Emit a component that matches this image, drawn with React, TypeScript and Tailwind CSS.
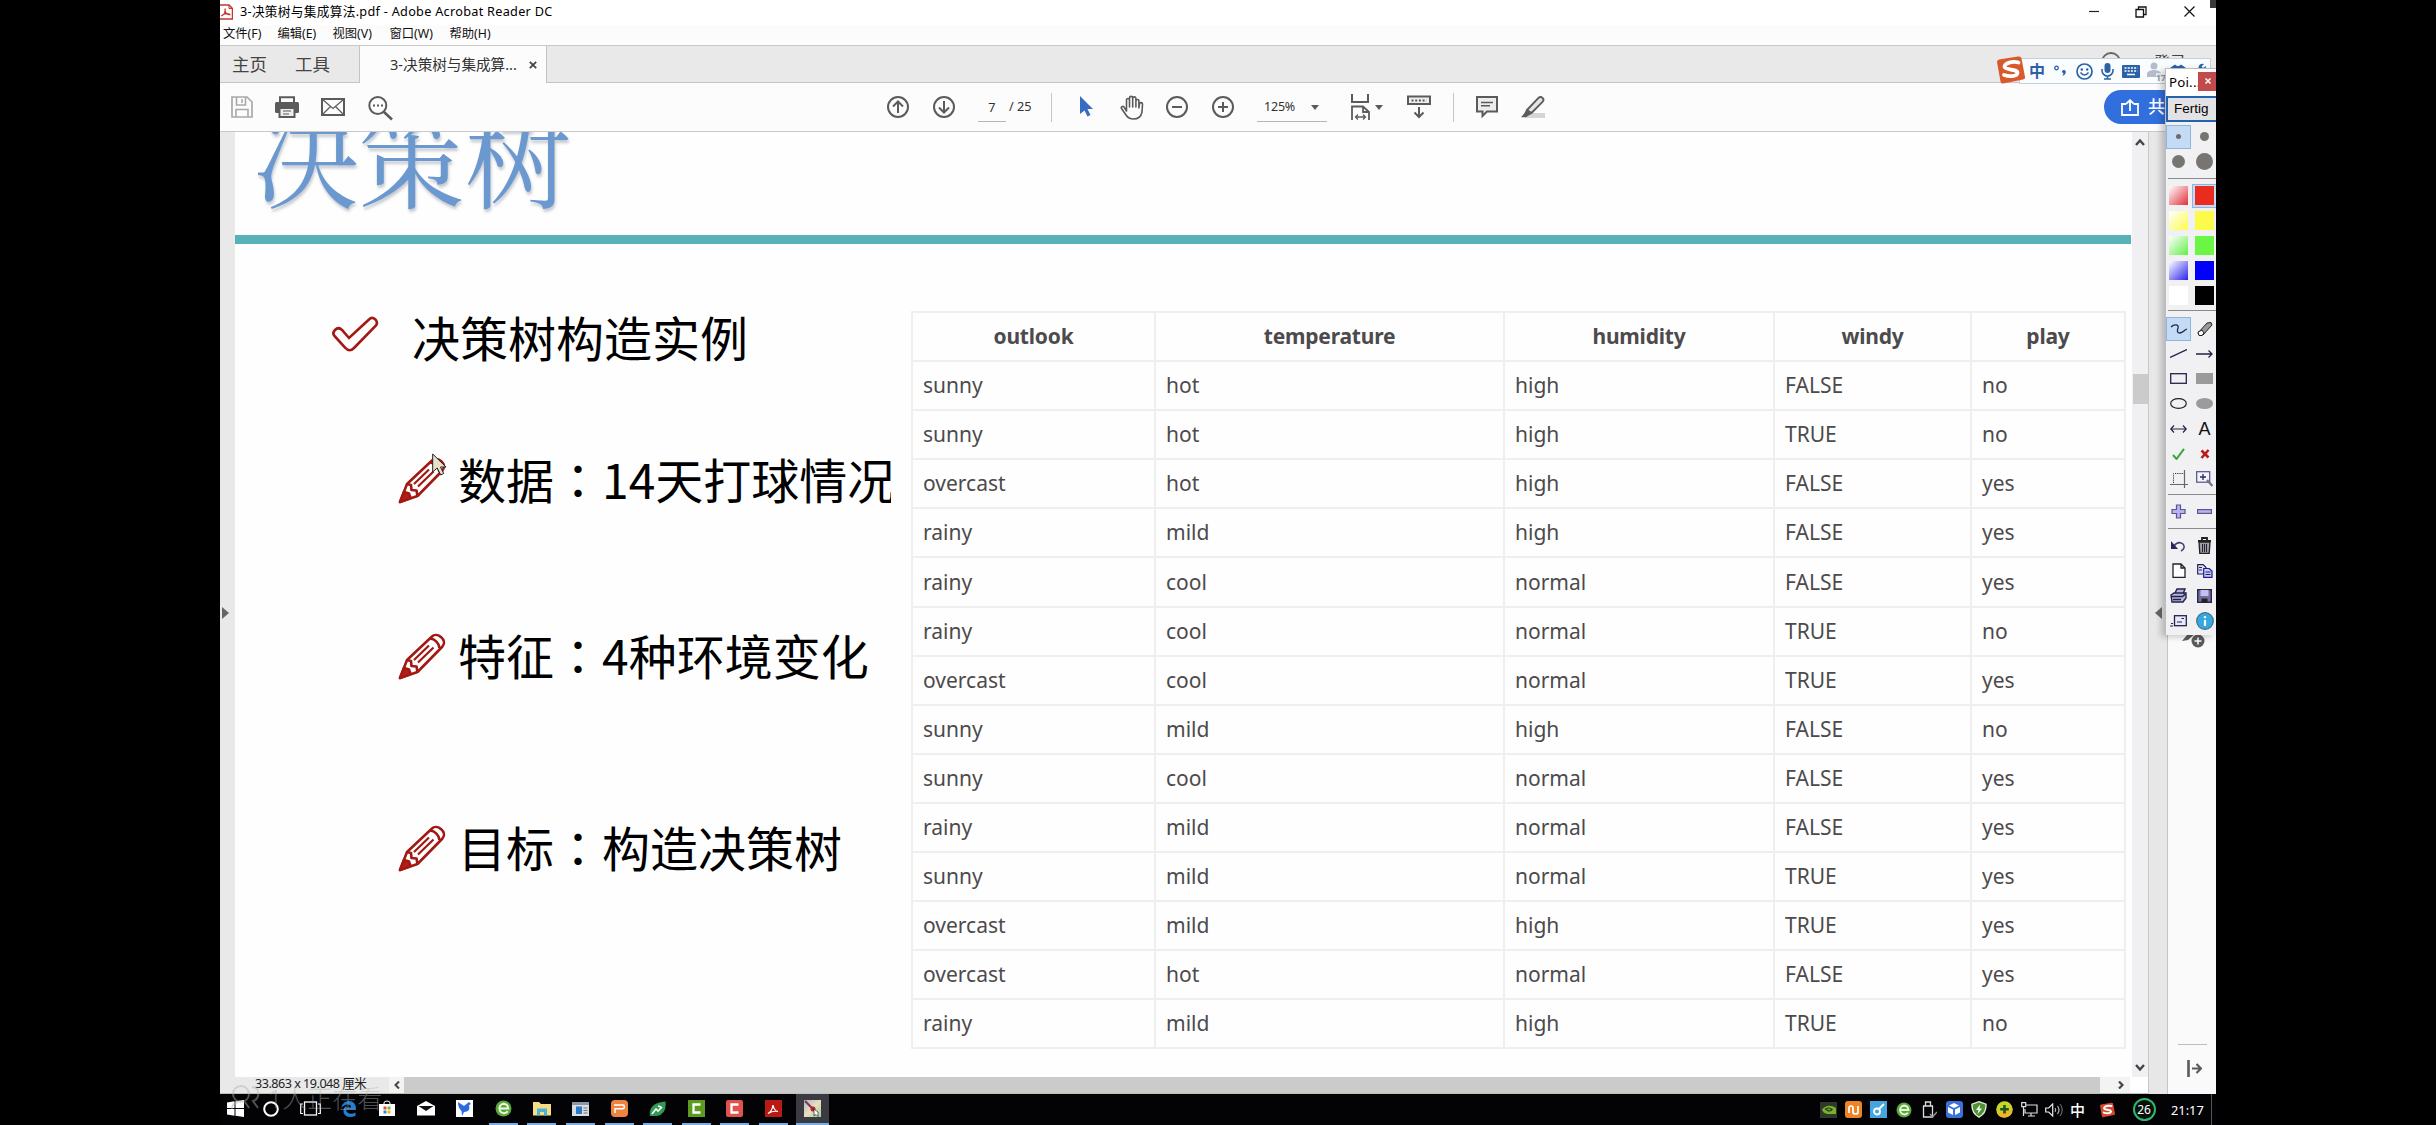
import React from "react";

const SANS = "font-['Noto_Sans','Noto_Sans_CJK_SC',sans-serif]";

type IconProps = { w: number; h: number; vb?: string; className?: string; children: React.ReactNode };
function Icon({ w, h, vb, className = "", children }: IconProps) {
  return (
    <svg width={w} height={h} viewBox={vb ?? `0 0 ${w} ${h}`} fill="none" className={`block shrink-0 ${className}`}>
      {children}
    </svg>
  );
}

const rows = [
  ["sunny", "hot", "high", "FALSE", "no"],
  ["sunny", "hot", "high", "TRUE", "no"],
  ["overcast", "hot", "high", "FALSE", "yes"],
  ["rainy", "mild", "high", "FALSE", "yes"],
  ["rainy", "cool", "normal", "FALSE", "yes"],
  ["rainy", "cool", "normal", "TRUE", "no"],
  ["overcast", "cool", "normal", "TRUE", "yes"],
  ["sunny", "mild", "high", "FALSE", "no"],
  ["sunny", "cool", "normal", "FALSE", "yes"],
  ["rainy", "mild", "normal", "FALSE", "yes"],
  ["sunny", "mild", "normal", "TRUE", "yes"],
  ["overcast", "mild", "high", "TRUE", "yes"],
  ["overcast", "hot", "normal", "FALSE", "yes"],
  ["rainy", "mild", "high", "TRUE", "no"],
];

function TitleBar() {
  return (
    <div className="flex h-[25px] items-center bg-white pb-[2px]">
      <Icon w={13} h={16} className="">
        <path d="M0 1h9l3.500 3.500V15H0" fill="#fff" stroke="#c0392f" strokeWidth="1.500" />
        <path d="M9 1v3.500h3.500" stroke="#c0392f" />
        <path d="M1 12c4-1.500 4.500-5 4-7.500M5 7c1 3 2.500 4 5.500 3.500M2.500 11c2-1.500 4.500-1.500 7-1" stroke="#c0392f" strokeWidth="1.300" />
      </Icon>
      <span className="ml-[7px] text-[12.700px] tracking-[0.28px] whitespace-nowrap text-black">3-决策树与集成算法.pdf - Adobe Acrobat Reader DC</span>
      <div className="ml-auto flex items-center">
        <Icon w={11} h={11}><path d="M0 5.500h10" stroke="#222" strokeWidth="1.200" /></Icon>
        <Icon w={12} h={12} className="ml-[35px]">
          <path d="M1 3.500h7.500V11H1zM3.500 3.500V1H11v7.500H8.500" stroke="#111" strokeWidth="1.300" />
        </Icon>
        <Icon w={11} h={11} className="mr-[21px] ml-[37px]"><path d="M.5.5l10 10M10.500.5l-10 10" stroke="#111" strokeWidth="1.200" /></Icon>
      </div>
    </div>
  );
}

function MenuBar() {
  return (
    <div className="flex h-[20px] items-center bg-[#fcfcfc] pb-[1px] pl-[3px] text-[12.300px] whitespace-nowrap text-[#111]">
      <span className="w-[54.500px]">文件(F)</span>
      <span className="w-[55px]">编辑(E)</span>
      <span className="w-[57px]">视图(V)</span>
      <span className="w-[60px]">窗口(W)</span>
      <span>帮助(H)</span>
    </div>
  );
}

function TabBar() {
  return (
    <div className="flex h-[38px] border-t border-[#c9c9cb] bg-[#e9e9e9] text-[#444]">
      <div className="flex w-[139px] items-center border-b border-[#c4c4c4] pl-[12px] text-[17.500px]">
        <span className="w-[63px]">主页</span>
        <span>工具</span>
      </div>
      <div className="flex w-[188px] items-center border-x border-[#c4c4c4] bg-[#fcfcfc] pl-[30px] text-[14.600px] whitespace-nowrap text-[#333]">
        <span className="w-[139px]">3-决策树与集成算...</span>
        <Icon w={8} h={8}><path d="M.8.8l6.400 6.400M7.200.8L.8 7.200" stroke="#444" strokeWidth="1.800" /></Icon>
      </div>
      <div className="flex flex-1 overflow-hidden border-b border-[#c4c4c4]">
        <Icon w={20} h={20} className="mt-[6px] ml-[1554px]"><circle cx="10" cy="10" r="9" stroke="#666" strokeWidth="1.800" /></Icon>
        <span className="ml-[33px] text-[16px] leading-[32px] text-[#444]">登录</span>
      </div>
    </div>
  );
}

const G = "#5b5b5b";
function Toolbar() {
  return (
    <div className="flex h-[49px] items-center border-b border-[#c9c9cb] bg-[#fcfcfc] text-[12.700px] text-[#333]">
      <Icon w={22} h={22} className="ml-[11px]">
        <path d="M1 1h15l5 5v15H1z" stroke="#a8a8a8" strokeWidth="1.700" />
        <path d="M5.500 1v8h9V1M11 3v4M5 21v-7.500h12V21" stroke="#a8a8a8" strokeWidth="1.600" />
      </Icon>
      <Icon w={24} h={22} className="ml-[22px]">
        <path d="M5 6V1.200h14V6" stroke={G} strokeWidth="2" />
        <rect x="0" y="6" width="24" height="11" rx="1.500" fill={G} />
        <rect x="4.500" y="12" width="15" height="9" fill="#eee" stroke={G} strokeWidth="2" />
        <path d="M8 15h8M8 18h6" stroke={G} strokeWidth="1.200" />
      </Icon>
      <Icon w={24} h={18} className="ml-[22px]">
        <rect x="1" y="1" width="22" height="16" stroke={G} strokeWidth="2" />
        <path d="M1.500 1.500L12 10.500 22.500 1.500M1.500 16.500l8-8M22.500 16.500l-8-8" stroke={G} strokeWidth="1.200" />
      </Icon>
      <Icon w={25} h={25} className="mt-[2px] ml-[23px]">
        <circle cx="9.800" cy="9.500" r="8.500" stroke={G} strokeWidth="2" />
        <path d="M16 16l8 7.500" stroke={G} strokeWidth="2.600" />
        <path d="M5 9.500h2M9 9.500h2M13 9.500h2" stroke={G} strokeWidth="2" />
      </Icon>
      <Icon w={22} h={22} className="ml-[494px]">
        <circle cx="11" cy="11" r="10" stroke={G} strokeWidth="2" />
        <path d="M11 17V5.500M6 10.500l5-5 5 5" stroke={G} strokeWidth="2" />
      </Icon>
      <Icon w={22} h={22} className="ml-[24px]">
        <circle cx="11" cy="11" r="10" stroke={G} strokeWidth="2" />
        <path d="M11 5v11.500M6 11.500l5 5 5-5" stroke={G} strokeWidth="2" />
      </Icon>
      <span className="mt-[2px] ml-[23px] h-[28px] w-[28px] border-b border-[#b5b5b5] text-center leading-[26px]">7</span>
      <span className="ml-[3px] w-[22px] whitespace-nowrap">/ 25</span>
      <span className="ml-[20px] h-[29px] w-px bg-[#c6c6c6]" />
      <Icon w={14} h={22} className="ml-[28px]"><path d="M0 0v18l4.500-3.500 3 6 3-1.500-3-6H13z" fill="#386cc0" /></Icon>
      <Icon w={24} h={25} className="ml-[26px]" vb="0 0 24 25">
        <path d="M6.500 16V5a1.500 1.500 0 013 0v7V3a1.600 1.600 0 013.200 0v9V3.500a1.600 1.600 0 013.200 0V12 6a1.500 1.500 0 013 0v7l.6-4a1.500 1.500 0 013 .2L22 17c-.8 4-3.500 7-8.500 7-4 0-6-1.600-7.500-4l-4.500-6.500c-.8-1.400 1.200-2.800 2.500-1.500z" stroke={G} strokeWidth="1.600" strokeLinejoin="round" />
      </Icon>
      <Icon w={22} h={22} className="ml-[22px]">
        <circle cx="11" cy="11" r="10" stroke={G} strokeWidth="2" /><path d="M6 11h10" stroke={G} strokeWidth="2" />
      </Icon>
      <Icon w={22} h={22} className="ml-[24px]">
        <circle cx="11" cy="11" r="10" stroke={G} strokeWidth="2" /><path d="M6 11h10M11 6v10" stroke={G} strokeWidth="2" />
      </Icon>
      <span className="mt-[2px] ml-[23px] flex h-[28px] w-[70px] items-center border-b border-[#b5b5b5] pl-[7px] text-[12.500px]">
        <span className="w-[47px] tracking-[-0.2px]">125%</span>
        <Icon w={8} h={5} className="mb-[1px]"><path d="M0 0h8L4 5z" fill={G} /></Icon>
      </span>
      <Icon w={19} h={26} className="ml-[24px]">
        <path d="M1 0v8h16V0" stroke={G} strokeWidth="2" />
        <path d="M1 26V12.500h11l6 5.500v8M12 12.500V18h6" stroke={G} strokeWidth="1.800" />
        <path d="M4.500 23h10M7 20.500L4.500 23 7 25.500M12 20.500l2.500 2.500-2.500 2.500" stroke={G} strokeWidth="1.300" />
      </Icon>
      <Icon w={8} h={5} className="ml-[5px]"><path d="M0 0h8L4 5z" fill={G} /></Icon>
      <Icon w={24} h={24} className="ml-[24px]">
        <rect x="1" y="1.500" width="22" height="7.500" stroke={G} strokeWidth="2" fill="#eee" />
        <path d="M4.500 5.500h15" stroke={G} strokeWidth="2" strokeDasharray="2 1.700" />
        <path d="M12 12v10M7.500 17.500l4.500 4.500 4.500-4.500" stroke={G} strokeWidth="2" />
      </Icon>
      <span className="ml-[22px] h-[29px] w-px bg-[#c6c6c6]" />
      <Icon w={22} h={22} className="ml-[22px]">
        <path d="M1 1h20v14.500H11L6.500 20v-4.500H1z" fill="#ececec" stroke={G} strokeWidth="2" />
        <path d="M5 6.500h12M5 9.800h9" stroke={G} strokeWidth="1.400" />
      </Icon>
      <Icon w={24} h={24} className="ml-[23px]">
        <path d="M7 18h17v5H4z" fill="#d5d5d5" />
        <path d="M6 15L17.500 2.800a2.800 2.800 0 014 4L10.500 18z" fill="#e5e5e5" stroke={G} strokeWidth="1.900" />
        <path d="M5.500 14.500l5 4.500-3 1.500-2.500 1.800H0l3-3.500z" fill={G} />
      </Icon>
      <div className="ml-auto flex h-[34px] w-[112px] items-center rounded-l-full bg-[#326fde] pl-[17px] text-white">
        <Icon w={18} h={17}>
          <path d="M5.500 5H1v11h16V5h-4.500M9 12V1.500M5.500 4.500L9 1.200l3.500 3.300" stroke="#fff" strokeWidth="1.800" />
        </Icon>
        <span className="ml-[9px] text-[17px] font-medium whitespace-nowrap">共享</span>
      </div>
    </div>
  );
}

function Pencil() {
  return (
    <Icon w={48} h={48} className="mr-[12px] mb-[2px]">
      <g stroke="#a31813" strokeWidth="2.600" strokeLinejoin="round">
        <path d="M2 46L9 28 34 4.500C39-.5 50 8 44.500 14.500L19.500 40z" />
        <path d="M9 28l4 1 .5 5 5 .5 1 5.500M32 6.500c5 .5 9 4.500 9.500 9.500" />
        <path d="M20 30.500L35.500 15.500M16 28L31 13.500" strokeWidth="2.200" />
        <path d="M2 46l4-10 5 1.500 1.500 4.500z" fill="#b81c15" />
      </g>
    </Icon>
  );
}

function Bullet({ className, label, children }: { className: string; label: string; children: React.ReactNode }) {
  return (
    <div className={`flex h-[48px] items-center pl-[163px] ${className}`}>
      <Pencil />
      <span className="-mt-[7px] w-[433px] overflow-hidden leading-[72px] whitespace-nowrap">
        {label}
        <span lang="zh-TW" className="font-['Noto_Sans_CJK_TC',sans-serif]">：</span>
        {children}
      </span>
    </div>
  );
}

function Page() {
  return (
    <div className="flex min-w-0 flex-1 flex-col overflow-hidden bg-[#fefefe]">
      <div className="flex h-[103px] shrink-0 overflow-hidden">
        <h1 className="-mt-[58px] ml-[18px] h-[160px] text-[106px] leading-[160px] font-normal whitespace-nowrap text-[#6b98cf] [text-shadow:1px_3px_3px_rgba(90,100,120,0.35)] font-['Noto_Serif_CJK_SC','Noto_Serif_SC','SimSun','Noto_Sans_CJK_SC',serif]">决策树</h1>
      </div>
      <div className="h-[9px] w-[1896px] shrink-0 bg-[#56b2b6]" />
      <div className="flex">
        <div className="w-[676px] shrink-0 text-[48px] text-black font-['Noto_Sans_CJK_SC',sans-serif]">
          <div className="mt-[71px] flex h-[48px] items-center pl-[97px]">
            <Icon w={47} h={36} className="-mt-[10px]">
              <path d="M3 14c3-3 5-2 7 0l7 8L37 3.500c4-4 10 1.500 7 6L22 32c-3 3-6 3-8.500 0L3 20.500c-2-2-2-4.500 0-6.500z" stroke="#a31813" strokeWidth="2.600" />
            </Icon>
            <span className="-mt-[7px] ml-[33px] leading-[48px]">决策树构造实例</span>
          </div>
          <Bullet className="mt-[94px]" label="数据">14天打球情况</Bullet>
          <Bullet className="mt-[128px]" label="特征">4种环境变化</Bullet>
          <Bullet className="mt-[144px]" label="目标">构造决策树</Bullet>
        </div>
        <table className="mt-[67px] h-[738px] w-[1213px] table-fixed border-collapse text-[21px] text-[#4c4a4c] font-['Noto_Sans',sans-serif]">
          <colgroup>
            <col className="w-[243px]" />
            <col className="w-[349px]" />
            <col className="w-[270px]" />
            <col className="w-[197px]" />
            <col className="w-[154px]" />
          </colgroup>
          <thead>
            <tr className="h-[49.100px]">
              {["outlook", "temperature", "humidity", "windy", "play"].map((h) => (
                <th key={h} className="border-2 border-[#efeff0] p-0 pb-[1px] leading-[28px] font-bold tracking-[-0.2px]">{h}</th>
              ))}
            </tr>
          </thead>
          <tbody>
            {rows.map((r, i) => (
              <tr key={i} className="h-[49.100px]">
                {r.map((c, j) => (
                  <td key={j} className="border-2 border-[#efeff0] p-0 pb-[1px] pl-[10px] leading-[28px]">{c}</td>
                ))}
              </tr>
            ))}
          </tbody>
        </table>
      </div>
    </div>
  );
}

function Document() {
  return (
    <div className="flex h-[945px]">
      <div className="flex w-[15px] items-center justify-center bg-[#e9e9e9] pb-0">
        <Icon w={7} h={12} className="mt-[16px] -ml-[4px]"><path d="M0 0v12l7-6z" fill="#666" /></Icon>
      </div>
      <Page />
      <div className="flex w-[16px] flex-col items-center bg-[#f0eff1]">
        <Icon w={10} h={8} className="mt-[6px]"><path d="M1 7l4-4.500L9 7" stroke="#444" strokeWidth="2.400" /></Icon>
        <div className="mt-[228px] h-[30px] w-[15px] bg-[#cbcbcb]" />
        <Icon w={10} h={8} className="mt-auto mb-[5px]"><path d="M1 1l4 4.500L9 1" stroke="#444" strokeWidth="2.400" /></Icon>
      </div>
    </div>
  );
}

function StatusBar() {
  return (
    <div className="flex h-[17px] items-center border-b border-[#b9c4b9] bg-[#e9e9e9] text-[12.600px] text-[#222]">
      <span className="w-[169px] pb-[2px] pl-[35px] tracking-[-0.5px] whitespace-nowrap">33.863 x 19.048 厘米</span>
      <span className="flex h-full w-[15px] items-center justify-center bg-[#f3f3f3]">
        <Icon w={6} h={8}><path d="M5 .5L1.500 4 5 7.500" stroke="#444" strokeWidth="2" /></Icon>
      </span>
      <span className="h-full w-[1696px] bg-[#cbcbcb]" />
      <span className="flex h-full flex-1 items-center bg-[#f3f3f3] pl-[18px]">
        <Icon w={6} h={8}><path d="M1 .5L4.500 4 1 7.500" stroke="#444" strokeWidth="2.200" /></Icon>
      </span>
      <span className="h-full w-[18px] bg-white" />
    </div>
  );
}

function SidePanel() {
  return (
    <div className="flex">
      <div className="flex w-[19px] flex-col items-center border-l border-[#c9c9cb] bg-[#e7e7e7] pt-[475px]">
        <Icon w={7} h={12}><path d="M7 0v12L0 6z" fill="#666" /></Icon>
      </div>
      <div className="flex w-[49px] flex-col items-center border-l border-[#c4c4c4] bg-[#fafafa] pt-[493px]">
        <Icon w={26} h={24} className="ml-[1px]">
          <path d="M2 16L12 4l5 3L8 15z" fill={G} />
          <circle cx="18" cy="16" r="6.500" fill={G} />
          <path d="M14.500 16h7M18 12.500v7" stroke="#fff" strokeWidth="1.500" />
        </Icon>
        <span className="mt-auto h-px w-[29px] bg-[#bdbdbd]" />
        <Icon w={15} h={17} className="mt-[15px] mb-[17px] ml-[4px]">
          <path d="M1.500 0v17" stroke={G} strokeWidth="2.600" />
          <path d="M5 8.500h9M9.500 4l4.500 4.500L9.500 13" stroke={G} strokeWidth="2.200" />
        </Icon>
      </div>
    </div>
  );
}

const BL = "#2a62a8";
function SogouBar() {
  return (
    <div className="absolute top-[58px] left-[1799px] flex h-[26px] w-[192px] items-center border border-[#c5cfdd] bg-[#fbfcfe] pl-[9px]">
      <Icon w={30} h={28} className="absolute top-[-3px] left-[-25px]">
        <path d="M2 6Q2 4 4 3.500L23 .5q3-.5 3.500 2L30 21q.5 2-2 2.500L8 27.500q-2 .5-2.500-2z" fill="#d9582c" />
        <path d="M23.500 6.500C17 5 10 7 9.500 10.500c0 4 13 2 13 6.500-.5 3.500-8 4-13.500 2" stroke="#fff" strokeWidth="3.800" strokeLinecap="round" />
      </Icon>
      <span className="w-[16px] text-[16px] leading-[22px] font-bold text-[#2a62a8]">中</span>
      <Icon w={13} h={14} className="ml-[9px]">
        <circle cx="2.500" cy="4" r="1.800" stroke={BL} strokeWidth="1.300" />
        <path d="M8 7.500a2 2 0 013.800 0q.2 3-3.500 4.500 1.500-2 1-3-1.500-.3-1.300-1.500z" fill={BL} />
      </Icon>
      <Icon w={17} h={17} className="ml-[9px]">
        <circle cx="8.500" cy="8.500" r="7.500" stroke={BL} strokeWidth="1.700" />
        <circle cx="5.800" cy="6.500" r="1.200" fill={BL} /><circle cx="11.200" cy="6.500" r="1.200" fill={BL} />
        <path d="M4.500 9.500q4 5 8 0" stroke={BL} strokeWidth="1.500" />
      </Icon>
      <Icon w={13} h={17} className="ml-[8px]">
        <rect x="3.500" y="0" width="6" height="10" rx="3" fill={BL} />
        <path d="M1 6v1.500a5.500 5.500 0 0011 0V6M6.500 13v3M3 16h7" stroke={BL} strokeWidth="1.600" />
      </Icon>
      <Icon w={18} h={13} className="ml-[8px]">
        <rect width="18" height="13" rx="1" fill={BL} />
        <path d="M2.500 3h13M2.500 6h13" stroke="#fff" strokeWidth="1.600" strokeDasharray="2 1.200" />
        <path d="M5 9.500h8" stroke="#fff" strokeWidth="1.500" />
      </Icon>
      <span className="relative ml-[7px] h-[18px] w-[18px]">
        <Icon w={16} h={16}><circle cx="7" cy="4" r="3.500" fill="#b4bccb" /><path d="M0 15V11q2-3 7-3t7 3v4z" fill="#b4bccb" /></Icon>
        <span className="absolute right-[-1px] bottom-[-2px] bg-white/70 text-[9px] leading-[9px] font-bold text-[#8f9bb0]">17</span>
      </span>
      <Icon w={16} h={15} className="ml-[5px]"><path d="M0 4l5-3.500q3 3 6 0L16 4l-2 4-2-1v8H4V7L2 8z" fill={BL} /></Icon>
      <Icon w={12} h={16} className="ml-[8px]"><path d="M10 1Q5 0 4.500 5L1 13l3 2L7 7q5 1 5-4L9 5 7.500 3.500z" fill={BL} /></Icon>
    </div>
  );
}

const N = "#23234a";
function Cell({ active, children }: { active?: boolean; children: React.ReactNode }) {
  return (
    <div className={active ? "flex h-[24px] w-[25px] items-center justify-center border border-[#8fb4dd] bg-[#c3dbf5]" : "flex h-[24px] w-[25px] items-center justify-center"}>
      {children}
    </div>
  );
}
const Rule = () => <div className="ml-[2px] h-px bg-[#8a8a8a]" />;

function Palette() {
  const swatches = [
    ["bg-[linear-gradient(135deg,#fff,#e0303a)]", "bg-[#ea2b20]"],
    ["bg-[linear-gradient(135deg,#fff,#fdfb4a)]", "bg-[#fdfb4a]"],
    ["bg-[linear-gradient(135deg,#fff,#62ef45)]", "bg-[#6bf645]"],
    ["bg-[linear-gradient(135deg,#fff,#2a22ee)]", "bg-[#0000fb]"],
    ["bg-white", "bg-black"],
  ];
  const grid = "grid w-[51px] grid-cols-[26px_25px] auto-rows-[25px] items-center";
  return (
    <div className="absolute top-[68px] left-[1945px] h-[567px] w-[51px] overflow-hidden border-t border-l border-[#b9bcc2] bg-[#f1f0f2] shadow-[-4px_2px_6px_rgba(0,0,0,0.2)]">
      <div className="flex h-[27px] items-center bg-white pl-[3px] text-[13.300px] tracking-[0.2px] text-black">
        <span className="w-[29px] shrink-0">Poi...</span>
        <span className="mb-[3px] flex h-[19px] w-[19px] shrink-0 items-center justify-center bg-[#c04a4c]">
          <Icon w={6} h={6}><path d="M.5.5l5 5M5.500.5l-5 5" stroke="#fff" strokeWidth="1.500" /></Icon>
        </span>
      </div>
      <div className="flex h-[26px] w-[60px] items-center border-2 border-[#2463ae] bg-[#e2e2e4] pl-[6px] text-[13.500px] text-black font-['Liberation_Sans',sans-serif]">Fertig</div>
      <div className={`${grid} pt-[2px]`}>
        <Cell active><span className="h-[5px] w-[5px] rounded-full bg-[#6f6c6a]" /></Cell>
        <Cell><span className="h-[9px] w-[9px] rounded-full bg-[#777472]" /></Cell>
        <Cell><span className="h-[13px] w-[13px] rounded-full bg-[#777472]" /></Cell>
        <Cell><span className="h-[17px] w-[17px] rounded-full bg-[#777472]" /></Cell>
      </div>
      <div className="pt-[4px]"><Rule /></div>
      <div className={`${grid} pt-[4px]`}>
        {swatches.flat().map((s, i) => (
          <Cell key={i} active={i === 1}><span className={`h-[19px] w-[19px] shrink-0 ${s}`} /></Cell>
        ))}
      </div>
      <div className="pt-[2px]"><Rule /></div>
      <div className={`${grid} pt-[5px]`}>
        <Cell active><Icon w={18} h={10}><path d="M1 3c3-3 8-3 7 1-1 3-1 5 2 5 3 0 4-3 7-4" stroke={N} strokeWidth="1.300" /></Icon></Cell>
        <Cell><Icon w={16} h={14}><path d="M1 11L10 1l4-.5 1 2.500-9 10H2z" fill="#999" stroke="#222" /><path d="M1 10l4-2 2 3-2 2.500H2z" fill="#fff" stroke="#222" /></Icon></Cell>
        <Cell><Icon w={17} h={9}><path d="M0 8.500L17 .5" stroke={N} strokeWidth="1.300" /></Icon></Cell>
        <Cell><Icon w={17} h={8}><path d="M0 4h16M12.500 0.500L16 4l-3.500 3.500" stroke={N} strokeWidth="1.300" /></Icon></Cell>
        <Cell><Icon w={17} h={11}><rect x=".7" y=".7" width="15.600" height="9.600" stroke={N} strokeWidth="1.300" /></Icon></Cell>
        <Cell><Icon w={17} h={11}><rect width="17" height="11" fill="#9b9b9b" /></Icon></Cell>
        <Cell><Icon w={17} h={11}><ellipse cx="8.500" cy="5.500" rx="7.800" ry="4.800" stroke="#222" strokeWidth="1.200" /></Icon></Cell>
        <Cell><Icon w={17} h={11}><ellipse cx="8.500" cy="5.500" rx="8.500" ry="5.500" fill="#9b9b9b" /></Icon></Cell>
        <Cell><Icon w={17} h={8}><path d="M1 4h15M4 .5L.8 4 4 7.500M13 .5L16.200 4 13 7.500" stroke={N} strokeWidth="1.200" /></Icon></Cell>
        <Cell><span className="text-[18px] leading-[20px] text-[#111] font-['Liberation_Sans',sans-serif]">A</span></Cell>
        <Cell><Icon w={13} h={12}><path d="M1 7l3.500 4L12 .8" stroke="#3da63a" strokeWidth="2" /></Icon></Cell>
        <Cell><Icon w={10} h={10}><path d="M1.500 1.500l7 7M8.500 1l-7 8" stroke="#b81c1c" strokeWidth="2.600" /></Icon></Cell>
        <Cell><Icon w={18} h={18}><path d="M0 14.500h18M14.500 0v18" stroke="#666" strokeWidth="1.200" /><path d="M3.500 13V3.500H14" stroke="#333" strokeDasharray="1.200 1" /></Icon></Cell>
        <Cell><Icon w={17} h={16}><rect x=".7" y=".7" width="13" height="10.500" fill="#f4f4ff" stroke="#554f88" strokeWidth="1.200" /><path d="M7 3v6M4 6h6" stroke="#29276b" strokeWidth="1.300" /><path d="M11 9l5.500 6" stroke="#776f86" strokeWidth="2.200" /></Icon></Cell>
      </div>
      <div className="pt-[3px]"><Rule /></div>
      <div className={`${grid} pt-[4px]`}>
        <Cell><Icon w={15} h={15}><path d="M5.500 1h4v4.500H14v4H9.500V14h-4V9.500H1v-4h4.500z" fill="#b6b3ee" stroke="#5a568f" strokeWidth="1.200" /></Icon></Cell>
        <Cell><Icon w={15} h={5}><rect x=".6" y=".6" width="13.800" height="3.800" fill="#b6b3ee" stroke="#5a568f" strokeWidth="1.200" /></Icon></Cell>
      </div>
      <div className="pt-[4px]"><Rule /></div>
      <div className={`${grid} pt-[4px]`}>
        <Cell><Icon w={15} h={12}><path d="M3 6q4-5.500 9-2 3 4-2 7" stroke="#433f72" strokeWidth="1.500" /><path d="M0 1v8h7z" fill="#29275a" /></Icon></Cell>
        <Cell><Icon w={15} h={17}><path d="M1 4h13M5 3V1h5v2" stroke="#222" strokeWidth="1.800" /><path d="M2 5h11l-.8 11.500H2.800z" fill="#9d9bab" stroke="#222" strokeWidth="1.300" /><path d="M5.500 7v8M7.500 7v8M9.500 7v8" stroke="#222" /></Icon></Cell>
        <Cell><Icon w={14} h={15}><path d="M1 1h8l4 4v9.300H1zM9 1v4h4" fill="#fff" stroke="#222" strokeWidth="1.300" /></Icon></Cell>
        <Cell><Icon w={16} h={14}><path d="M.7.7h5.500L9 3.500V10H.7z" fill="#dcdcff" stroke="#23234a" strokeWidth="1.200" /><path d="M6.700 4.500h5.500L15 7v6.300H6.700z" fill="#c9c9ff" stroke="#1c1c9a" strokeWidth="1.200" /><path d="M2 3.500h3M2 6h3M8.500 8h5M8.500 10.500h5" stroke="#23234a" /></Icon></Cell>
        <Cell><Icon w={17} h={15}><path d="M5 5l2-4h8l-2 5M1 7l3-2h12v5l-3 4H2z" fill="#b6b3de" stroke="#23234a" strokeWidth="1.400" /><path d="M1.500 8.500h11L15.500 6M3 11.500h8" stroke="#23234a" strokeWidth="1.400" /></Icon></Cell>
        <Cell><Icon w={15} h={14}><rect x=".7" y=".7" width="13.600" height="12.600" fill="#716f9f" stroke="#2a2844" strokeWidth="1.400" /><rect x="3.500" y="1" width="8" height="6" fill="#c3c0f0" /><rect x="4.500" y="9.500" width="6" height="4" fill="#222" /></Icon></Cell>
        <Cell><Icon w={17} h={12}><rect x="4.500" y=".7" width="11.800" height="10" fill="#e8e8ff" stroke="#23234a" strokeWidth="1.300" /><path d="M11.500 3.500h2.500M7 7h5M0 11h3M1 8.500h2" stroke="#23234a" strokeWidth="1.200" /></Icon></Cell>
        <Cell><Icon w={18} h={18}><circle cx="9" cy="9" r="8.300" fill="#35a8e0" stroke="#3f6f85" strokeWidth="1.200" /><path d="M9 8v6M9 4v2.200" stroke="#fff" strokeWidth="2.200" /></Icon></Cell>
      </div>
    </div>
  );
}

function Tile({ className, children }: { className: string; children?: React.ReactNode }) {
  return <span className={`flex h-[17px] w-[17px] items-center justify-center ${className}`}>{children}</span>;
}

const GreenE = ({ s }: { s: number }) => (
  <Icon w={s} h={s} vb="0 0 16 16">
    <circle cx="8" cy="8" r="7.500" fill="#5aa83a" />
    <path d="M12 10.800A4.500 4.500 0 118 3.500q4 .2 4.500 4.500H4" stroke="#eefae0" strokeWidth="1.800" />
  </Icon>
);

function Taskbar() {
  const apps: { icon: React.ReactNode; open?: boolean; hot?: boolean }[] = [
    { icon: <Icon w={17} h={17}><path d="M0 2.500L7.500 1.300V8H0zM8.500 1.200L17 0v8H8.500zM0 9h7.500v6.700L0 14.500zM8.500 9H17v8l-8.500-1.200z" fill="#fff" /></Icon> },
    { icon: <Icon w={16} h={16}><circle cx="8" cy="8" r="6.800" stroke="#fff" strokeWidth="2" /></Icon> },
    { icon: <Icon w={21} h={15}><rect x="4.500" y="1" width="12" height="13" stroke="#fff" strokeWidth="1.300" /><path d="M3 3H.7v9.500H3M18 3h2.300v9.500H18" stroke="#fff" strokeWidth="1.200" /></Icon> },
    { icon: <Icon w={17} h={17}><path d="M1 8Q3 1 9 1q7 0 7 8.500H6q.5 4 4.500 4.200 3 0 5-1.200v3.300Q13 17 10 17 3 16.500 3.500 10 4 6.500 7.500 5.500 6.300 6.300 6.200 7.500H11Q11 4.500 8 4.500 4 4.500 1 8z" fill="#1e7fd4" /></Icon> },
    { icon: <Icon w={16} h={17}><path d="M5 4V3q0-2 3-2t3 2v1" stroke="#fff" /><path d="M0 4h16v12H0z" fill="#fff" /><path d="M4.500 6.500h3v3h-3z" fill="#e2512c" /><path d="M8.500 6.500h3v3h-3z" fill="#7fb63a" /><path d="M4.500 10.500h3v3h-3z" fill="#2e8ad0" /><path d="M8.500 10.500h3v3h-3z" fill="#f0b429" /></Icon> },
    { icon: <Icon w={18} h={15}><path d="M9 0l9 5v9.500H0V5z" fill="#fff" /><path d="M1.500 5h15L9 10z" fill="#111" /></Icon> },
    { icon: <Tile className="bg-white"><Icon w={15} h={15}><path d="M1 1l6 4 5-4 2 2-2 1q2 7-5 7l-2 4-.5-5Q1 7 1 1z" fill="#2a6be0" /></Icon></Tile> },
    { icon: <GreenE s={17} />, open: true },
    { icon: <Icon w={18} h={15}><path d="M0 1h6l2 2h10v11.500H0z" fill="#f6dc86" /><path d="M4 14.500V7.500h10v7h-3V11H7v3.500z" fill="#4db2d8" /></Icon>, open: true },
    { icon: <Icon w={17} h={14}><rect width="17" height="14" fill="#d8dde3" /><rect y="0" width="17" height="3" fill="#8a98a8" /><rect x="4" y="4.500" width="6" height="7.500" fill="#2c79c8" /><path d="M11.500 6h4M11.500 8.500h4M11.500 11h4" stroke="#777" /></Icon>, open: true },
    { icon: <Tile className="rounded-[4px] bg-[#ef8440]"><Icon w={11} h={9}><path d="M0 1h8.500q2 0 2 1.700T8.500 4.700H1V9" stroke="#fff" strokeWidth="1.500" /></Icon></Tile>, open: true },
    { icon: <Icon w={17} h={16}><path d="M1 15Q-1 2 16.500.5 18 13 8 15z" fill="#2f9a55" /><path d="M3 13l4-5 2 2 4-4M9 5l3 1" stroke="#fff" strokeWidth="1.700" /></Icon>, open: true },
    { icon: <Tile className="bg-[#5c9a20]"><Icon w={9} h={11}><path d="M8.500 1.500H1.500v8h7" stroke="#fff" strokeWidth="2.300" /></Icon></Tile>, open: true },
    { icon: <Tile className="rounded-[2px] bg-[#e0524c]"><Icon w={9} h={11}><path d="M8.500 1.500H1.500v8h7" stroke="#fff" strokeWidth="2.300" /></Icon></Tile>, open: true },
    { icon: <Tile className="bg-[#b91a14]"><Icon w={12} h={12}><path d="M1 10.500q4-2 5-8.500 1 6 5 6.500-5-1-10 2" stroke="#fff" strokeWidth="1.200" /></Icon></Tile>, open: true },
    { icon: <Tile className="bg-[linear-gradient(135deg,#b4b0c8,#e8dfc0_50%,#a8cf9c)]"><Icon w={17} h={17}><path d="M1 1l8 8" stroke="#7a3550" strokeWidth="2" /><circle cx="9" cy="9" r="2.500" fill="#b8202c" /><path d="M10 9v7l2-1.500 2 2V12z" fill="#fff" stroke="#222" strokeWidth=".7" /></Icon></Tile>, open: true, hot: true },
  ];
  const tray: [number, React.ReactNode][] = [
    [25, <span className="flex h-[16px] w-[17px] items-center justify-center bg-[#30382c]"><Icon w={14} h={9}><path d="M0 4.500Q6-2 14 3v6H5Q1 8 0 4.500z" fill="#76b12a" /><path d="M3 4.500q3.500-3 7 0-3 3-5.500 0" stroke="#22301a" strokeWidth="1.200" /></Icon></span>],
    [25, <Tile className="rounded-[3px] bg-[#ee8326]"><Icon w={11} h={10}><path d="M1 8V3q0-2 2-2t2 2v4q0 2 2.500 2T10 7V1" stroke="#fff" strokeWidth="1.700" /></Icon></Tile>],
    [25, <Tile className="bg-[#44a5e0]"><Icon w={13} h={13}><circle cx="5" cy="8.500" r="3" stroke="#fff" strokeWidth="1.800" /><path d="M7 6l5-5" stroke="#fff" strokeWidth="2" /></Icon></Tile>],
    [25, <GreenE s={16} />],
    [26, <Icon w={15} h={17}><path d="M3.500 5V1h5v4M1.500 5h9v11h-9z" stroke="#ddd" strokeWidth="1.300" /><path d="M8 13l2.500 3L15 11" stroke="#999" strokeWidth="1.500" /></Icon>],
    [24.5, <Tile className="rounded-[3px] bg-[#3b71d8]"><Icon w={14} h={13}><path d="M7 0l5 2.500L7 5 2 2.500zM1 4l5 2.500V12L1 9.500zM13 4L8 6.500V12l5-2.500z" fill="#fff" /></Icon></Tile>],
    [25, <Icon w={16} h={17}><path d="M8 .7l7 2.500q.5 9-7 13-7.500-4-7-13z" fill="#4f9133" stroke="#e3efd8" strokeWidth="1.400" /><path d="M9 3.500L5 9h2.500L6.500 13 11 7.500H8.500z" fill="#fff" /></Icon>],
    [25.5, <Icon w={17} h={17}><circle cx="8.500" cy="8.500" r="8.300" fill="#c6d52c" /><path d="M1 12Q7 10 16 9q-1 7.500-8 7.500-5 0-7-4.500z" fill="#efb62c" /><path d="M8.500 4v8.500M4.200 8.200h8.600" stroke="#24541b" strokeWidth="2.600" /></Icon>],
    [25, <Icon w={17} h={15}><path d="M5 3h11v8H4V7M7 14h7M10 11v3" stroke="#ddd" strokeWidth="1.200" /><path d="M.7.7h4v4h-4zM2.500 5v9" stroke="#ddd" strokeWidth="1.200" /></Icon>],
    [24, <Icon w={18} h={14}><path d="M.7 5h3l4-4v12l-4-4h-3z" stroke="#e8e8e8" strokeWidth="1.200" /><path d="M10 5q1.500 2 0 4M12.500 3q3 4 0 8" stroke="#bbb" strokeWidth="1.200" /><path d="M15 1q4.500 6 0 12" stroke="#666" strokeWidth="1.200" /></Icon>],
    [23, <span className="text-[15px] leading-[20px] font-medium text-white">中</span>],
    [36, <Icon w={16} h={16} vb="0 0 30 28"><path d="M2 6Q2 4 4 3.500L23 .5q3-.5 3.500 2L30 21q.5 2-2 2.500L8 27.500q-2 .5-2.500-2z" fill="#d8482c" /><path d="M23.500 6.500C17 5 10 7 9.500 10.500c0 4 13 2 13 6.500-.5 3.500-8 4-13.500 2" stroke="#fff" strokeWidth="3.800" strokeLinecap="round" /></Icon>],
    [38, <span className="flex h-[23px] w-[23px] items-center justify-center rounded-full border-2 border-[#2fb56c] bg-[#06110c] text-[12px] leading-[12px] text-white">26</span>],
  ];
  return (
    <div className="relative flex h-[31px] w-full bg-[#030306]">
      <div className="flex">
        {apps.map((a, i) => (
          <div key={i} className="flex w-[38.600px] justify-center first:w-[31px] nth-2:w-[40px]">
            <div className={a.hot ? "flex w-[33px] flex-col items-center bg-[#3a3a40]" : "flex w-[29px] flex-col items-center"}>
              <div className="flex h-[29px] items-center">{a.icon}</div>
              <div className={a.open ? "h-[2px] w-full bg-[#76aee6]" : "h-[2px] w-full"} />
            </div>
          </div>
        ))}
      </div>
      <div className="ml-auto flex items-center pr-[4px]">
        {tray.map(([w, icon], i) => (
          <div key={i} style={{ width: w }} className="flex shrink-0 justify-center">{icon}</div>
        ))}
        <span className="ml-[8px] w-[40px] text-[12.800px] leading-[20px] text-white">21:17</span>
        <span className="h-[31px] w-px bg-[#555]" />
      </div>
      <div className="absolute -top-[10px] left-[10px] flex items-start text-[#b0b0b0]/45">
        <Icon w={32} h={26}>
          <circle cx="11" cy="10" r="8" stroke="currentColor" strokeWidth="2" />
          <path d="M2 25q0-6 6-7M15 18l4 6M22 3q8 1 6 9-1 4-5 5l5 7" stroke="currentColor" strokeWidth="2" />
        </Icon>
        <span className="ml-[6px] text-[25px] leading-[28px] font-light whitespace-nowrap">1人正在看</span>
      </div>
    </div>
  );
}

export default function App() {
  return (
    <div className={`flex h-[1125px] w-[2436px] justify-center overflow-hidden bg-black ${SANS}`}>
      <div className="relative flex w-[1996px] flex-col overflow-hidden bg-white">
        <TitleBar />
        <MenuBar />
        <TabBar />
        <Toolbar />
        <div className="flex">
          <div className="w-[1928px]">
            <Document />
            <StatusBar />
          </div>
          <SidePanel />
        </div>
        <Taskbar />
        <SogouBar />
        <Palette />
        <span className="absolute top-0 right-0 h-[8px] w-[6px] bg-[#3a3a3a]" />
        <Icon w={16} h={24} className="absolute top-[453px] left-[212px]">
          <path d="M.7 1v18l4.500-4 3.500 7 3-1.500L8.500 14H14z" fill="#e8e0c8" stroke="#222" />
        </Icon>
      </div>
    </div>
  );
}
